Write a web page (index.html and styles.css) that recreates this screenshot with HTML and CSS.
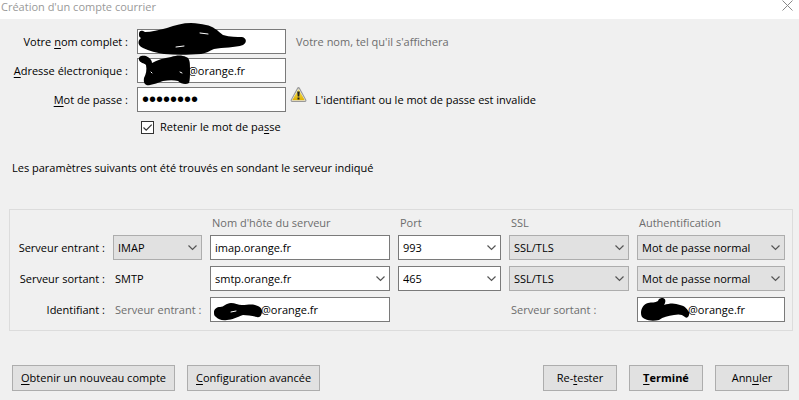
FILE: index.html
```html
<!DOCTYPE html>
<html lang="fr">
<head>
  <meta charset="UTF-8" />
  <meta name="viewport" content="width=device-width, initial-scale=1.0"/>
  <title>Création d'un compte courrier</title>
  <link rel="stylesheet" href="styles.css">
</head>
<body>

  <header class="titlebar">
    <h1>Création d'un compte courrier</h1>
    <button type="button" class="close" aria-label="Fermer">
      <svg width="11" height="11" viewBox="0 0 11 11"><path d="M0.5 0.5L10.5 10.5M10.5 0.5L0.5 10.5"/></svg>
    </button>
  </header>

  <form>
    <!-- Identity -->
    <div class="identity">
      <label for="name">Votre <u>n</u>om complet :</label>
      <div class="field">
        <input type="text" id="name" />
        <svg class="scribble" viewBox="0 0 110 25">
          <path d="M2 5C2 1 5 1 8 3C14 3 22 1 30 -1C38 -4 46 -6 54 -6C60 -6 64 -5 69 -4C76 -3 81 2 86 6C93 8 100 8 105 8C110 9 110 14 106 16C98 19 86 18 77 20C72 22 70 24 64 25C50 26 38 26 27 25C20 24 12 22 6 19C1 17 0 12 4 9C2 8 2 7 2 5Z"/>
          <path class="gap" d="M63 4L71 5M39 18L47 17"/>
        </svg>
      </div>
      <span class="hint">Votre nom, tel qu'il s'affichera</span>

      <label for="email"><u>A</u>dresse électronique :</label>
      <div class="field">
        <input type="text" id="email" class="masked" value="@orange.fr" />
        <svg class="scribble" viewBox="0 0 110 25">
          <path d="M2 2C1 -2 5 -3 9 -2C13 0 15 2 15 5C20 2 27 0 34 -1C40 -3 45 -3 49 -1C53 0 53 5 53 11C53 17 53 22 52 25C49 27 44 26 41 23C37 22 32 22 26 23C21 25 17 26 13 27C9 28 6 26 7 20C9 16 10 12 9 7C7 5 3 5 2 2Z"/>
          <path class="gap" d="M14 14L15 15M43 14L45 15"/>
        </svg>
      </div>
      <span></span>

      <label for="password"><u>M</u>ot de passe :</label>
      <div class="field">
        <input type="password" id="password" value="motpasse" />
      </div>
      <span class="warning">
        <svg width="17" height="16" viewBox="0 0 17 16">
          <defs>
            <linearGradient id="sign" x1="0" y1="0" x2="0" y2="1">
              <stop offset="0" stop-color="#f7e860"/>
              <stop offset="1" stop-color="#dfb000"/>
            </linearGradient>
          </defs>
          <path d="M8.5 1.5L15 13.5H2Z" fill="#999" stroke="#999" stroke-width="2.8" stroke-linejoin="round"/>
          <path d="M8.5 1.8L15 13.5H2Z" fill="#e4e4e4" stroke="#e4e4e4" stroke-width="1" stroke-linejoin="round"/>
          <path d="M8.5 2.2L14.8 13.3H2.2Z" fill="url(#sign)"/>
          <path d="M7.2 4.5H9.8L9.3 9.5H7.7Z" fill="#222"/>
          <rect x="7.5" y="10.5" width="2" height="2" fill="#222"/>
        </svg>
        L'identifiant ou le mot de passe est invalide
      </span>

      <div class="remember">
        <input type="checkbox" id="remember" checked />
        <label for="remember">Retenir le mot de pa<u>s</u>se</label>
      </div>
    </div>

    <p class="status">Les paramètres suivants ont été trouvés en sondant le serveur indiqué</p>

    <!-- Server settings -->
    <div class="servers">
      <span class="head host-head">Nom d'hôte du serveur</span>
      <span class="head">Port</span>
      <span class="head">SSL</span>
      <span class="head">Authentification</span>

      <label class="row-label" for="in-type">Serveur entrant :</label>
      <select id="in-type"><option>IMAP</option><option>POP3</option></select>
      <input type="text" value="imap.orange.fr" aria-label="Nom d'hôte du serveur entrant" />
      <select class="combo" aria-label="Port du serveur entrant"><option>993</option><option>143</option></select>
      <select aria-label="SSL du serveur entrant"><option>SSL/TLS</option><option>STARTTLS</option></select>
      <select aria-label="Authentification du serveur entrant"><option>Mot de passe normal</option></select>

      <label class="row-label" for="out-host">Serveur sortant :</label>
      <span class="text">SMTP</span>
      <select class="combo" id="out-host"><option>smtp.orange.fr</option></select>
      <select class="combo" aria-label="Port du serveur sortant"><option>465</option><option>587</option></select>
      <select aria-label="SSL du serveur sortant"><option>SSL/TLS</option><option>STARTTLS</option></select>
      <select aria-label="Authentification du serveur sortant"><option>Mot de passe normal</option></select>

      <span class="row-label">Identifiant :</span>
      <label class="text muted" for="in-user">Serveur entrant :</label>
      <div class="field">
        <input type="text" id="in-user" class="masked" value="@orange.fr" />
        <svg class="scribble" viewBox="0 0 110 25">
          <path d="M4 15C4 12 7 10 10 10C14 10 16 6 21 6C25 6 28 8 32 8C37 8 41 7 45 8C49 9 52 11 52 14C52 18 50 21 47 20C42 19 37 18 33 18C27 20 22 23 17 23C12 24 8 22 6 20C4 19 4 17 4 15Z"/>
          <path class="gap" d="M21 15L26 14"/>
        </svg>
      </div>
      <span></span>
      <label class="text muted" for="out-user">Serveur sortant :</label>
      <div class="field">
        <input type="text" id="out-user" class="masked" value="@orange.fr" />
        <svg class="scribble" viewBox="0 0 110 25">
          <path d="M4 16C4 11 7 7 11 6C15 5 18 6 21 4C22 1 24 1 26 1C29 2 29 5 27 8C33 6 38 6 43 8C48 9 50 12 52 15C53 19 50 22 48 20C45 17 41 17 37 18C31 19 26 20 22 23C17 24 12 24 8 22C5 21 4 19 4 16Z"/>
        </svg>
      </div>
    </div>

    <div class="actions">
      <button type="button"><u>O</u>btenir un nouveau compte</button>
      <button type="button"><u>C</u>onfiguration avancée</button>
      <span class="spacer"></span>
      <button type="button">Re-<u>t</u>ester</button>
      <button type="submit" class="default"><u>T</u>erminé</button>
      <button type="button">Ann<u>u</u>ler</button>
    </div>
  </form>

</body>
</html>
```
FILE: styles.css
```css
* {
  box-sizing: border-box;
  margin: 0;
  padding: 0;
}

body {
  min-height: 100vh;
  background: #f0f0f0;
  color: #000;
  font-family: "Open Sans", sans-serif;
  font-size: 11px;
  line-height: 16px;
  white-space: nowrap;
}

input,
select,
button {
  font: inherit;
  color: inherit;
  border-radius: 0;
}

u {
  text-underline-offset: 2px;
}

/* Title bar */
.titlebar {
  display: flex;
  justify-content: space-between;
  align-items: flex-start;
  height: 19px;
  padding: 0 6px 0 1px;
  background: #fff;
}

.titlebar h1 {
  color: #999;
  font-size: 11px;
  font-weight: normal;
  line-height: 13px;
}

.close {
  display: flex;
  border: none;
  background: none;
}

.close path {
  stroke: #888;
  fill: none;
}

/* Fields */
input[type="text"],
input[type="password"],
select {
  width: 100%;
  min-width: 0;
  height: 25px;
  padding: 0 4px;
  border: 1px solid #7a7a7a;
  background: #fff;
}

input[type="password"] {
  display: block;
  font-family: "Liberation Sans", sans-serif;
  font-size: 20px;
}

select {
  appearance: none;
  border-color: #adadad;
  background: #e1e1e1 url("data:image/svg+xml,%3Csvg xmlns='http://www.w3.org/2000/svg' width='9' height='6'%3E%3Cpath d='M.5 .5l4 4 4-4' fill='none' stroke='%23555' stroke-width='1.2'/%3E%3C/svg%3E") no-repeat right 4px center;
}

select.combo {
  border-color: #7a7a7a;
  background-color: #fff;
}

input.masked {
  padding-left: 50px;
}

.field {
  position: relative;
}

.scribble {
  position: absolute;
  top: 0;
  left: 0;
  width: 110px;
  height: 25px;
  overflow: visible;
  pointer-events: none;
}

.scribble .gap {
  stroke: #fff;
  stroke-linecap: round;
}

/* Identity */
.identity {
  display: grid;
  grid-template-columns: 133px 149px 1fr;
  align-items: center;
  gap: 4px;
  padding-top: 10px;
}

.identity > label {
  padding-right: 5px;
  text-align: right;
}

.hint,
.head,
.muted {
  color: #6d6d6d;
}

.hint {
  padding-left: 6px;
}

.warning {
  display: flex;
  gap: 8px;
  line-height: 25px;
}

.remember {
  display: flex;
  grid-column: 2 / 4;
  align-items: center;
  gap: 6px;
  padding: 3px 4px;
}

input[type="checkbox"] {
  appearance: none;
  width: 13px;
  height: 13px;
  border: 1px solid #333;
  background: #fff;
}

input[type="checkbox"]:checked {
  background: #fff url("data:image/svg+xml,%3Csvg xmlns='http://www.w3.org/2000/svg' width='11' height='11'%3E%3Cpath d='M1.5 5.5l2.7 2.7 5.5-5.5' fill='none' stroke='%23333' stroke-width='1.2'/%3E%3C/svg%3E") no-repeat center;
}

.status {
  padding: 22px 12px 0;
}

/* Server settings */
.servers {
  display: grid;
  grid-template-columns: 87px 89px 180fr 103fr 120fr 148fr;
  align-items: center;
  gap: 6px 8px;
  margin: 33px 6px 0 9px;
  padding: 5px 7px 8px 8px;
  border: 1px solid #dcdcdc;
}

.head,
.text {
  padding-left: 2px;
}

.host-head {
  grid-column: 3;
}

.head {
  height: 14px;
}

.row-label {
  text-align: right;
}

/* Buttons */
.actions {
  display: flex;
  gap: 12px;
  padding: 34px 10px 8px 12px;
}

.actions button {
  min-width: 74px;
  height: 26px;
  padding: 0 8px;
  border: 1px solid #adadad;
  background: #e1e1e1;
}

.actions .default {
  font-weight: bold;
}

.spacer {
  flex: 1;
}
```
